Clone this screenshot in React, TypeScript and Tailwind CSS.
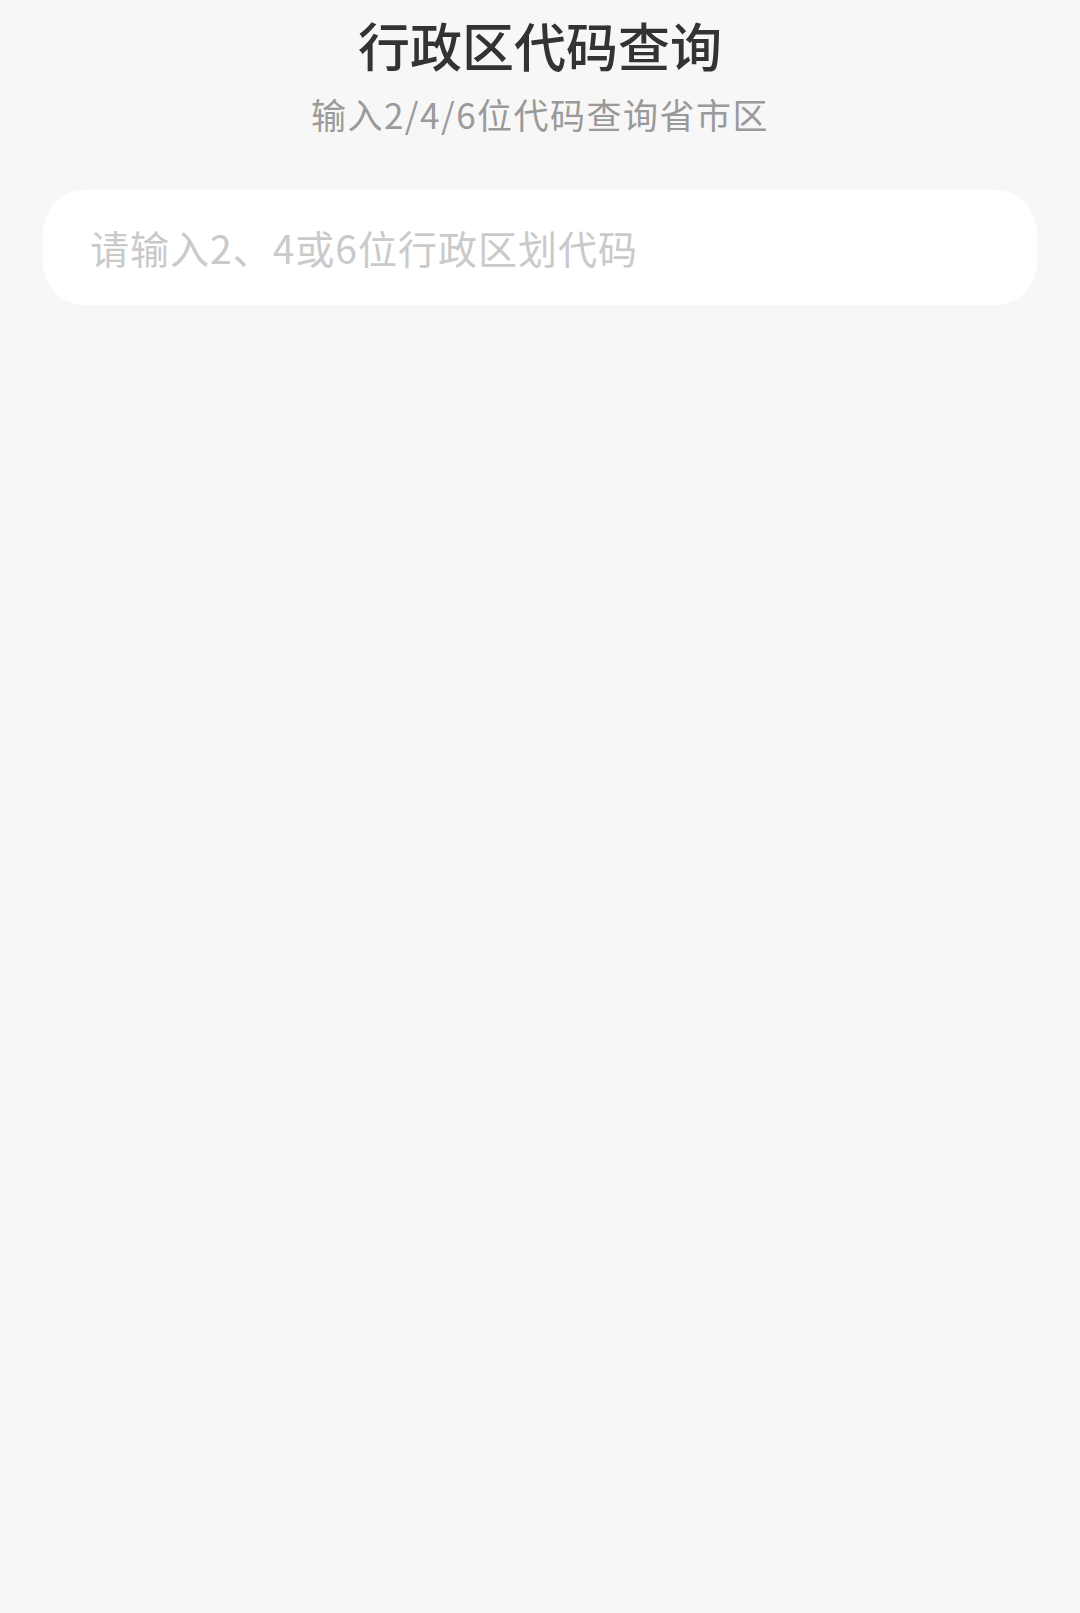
export default function App() {
  return (
    <div
      className="min-h-screen bg-[#f7f7f7] px-[43px] pt-[15px]"
      style={{ fontFamily: '"Noto Sans CJK SC", "Noto Sans", sans-serif' }}
    >
      <h1 className="text-center text-[52px] leading-[60px] font-medium text-[#333333]">
        行政区代码查询
      </h1>
      <p className="mt-[19px] text-center text-[35px] leading-[40px] tracking-[1.5px] text-[#9a9a9a]">
        输入2/4/6位代码查询省市区
      </p>

      <div className="mt-[56px] flex h-[115px] items-center rounded-[42px] bg-white px-[47px]">
        <input
          type="text"
          placeholder="请输入2、4或6位行政区划代码"
          className="w-full bg-transparent text-[39px] tracking-[1px] text-[#333333] outline-none placeholder:text-[#cacaca]"
        />
      </div>
    </div>
  );
}
